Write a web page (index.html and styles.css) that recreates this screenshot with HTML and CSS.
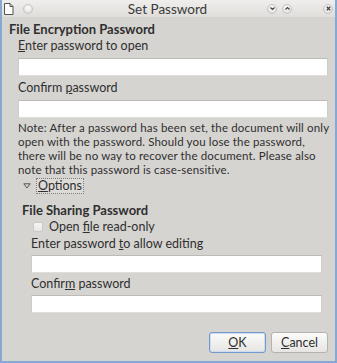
FILE: index.html
```html
<!DOCTYPE html>
<html>
<head>
<meta charset="utf-8">
<link rel="stylesheet" href="styles.css">
</head>
<body>
<div class="window">
  <div class="titlebar">
    <div class="tb-left">
      <svg class="doc-icon" width="11" height="12" viewBox="0 0 11 12"><path d="M1.5 0.5 H7 L10 3.5 V11.5 H1.5 Z" fill="#fff" stroke="#555" stroke-width="1"/><path d="M7 0.5 V3.5 H10" fill="none" stroke="#555" stroke-width="1"/></svg>
      <span class="tb-btn"></span>
    </div>
    <div class="title">Set Password</div>
    <div class="tb-right">
      <span class="tb-btn"><svg width="11" height="11" viewBox="0 0 11 11"><path d="M3.5 4.5 L5.5 6.5 L7.5 4.5" fill="none" stroke="#444" stroke-width="1.2"/></svg></span>
      <span class="tb-btn"><svg width="11" height="11" viewBox="0 0 11 11"><path d="M3.5 6.5 L5.5 4.5 L7.5 6.5" fill="none" stroke="#444" stroke-width="1.2"/></svg></span>
      <span class="tb-btn close"><svg width="11" height="11" viewBox="0 0 11 11"><path d="M3.8 3.8 L7.2 7.2 M7.2 3.8 L3.8 7.2" fill="none" stroke="#444" stroke-width="1.3"/></svg></span>
    </div>
  </div>
  <div class="content">
    <div class="heading">File Encryption Password</div>
    <div class="section enc">
      <div class="label first"><u>E</u>nter password to open</div>
      <div class="input"></div>
      <div class="label">Confirm <u>p</u>assword</div>
      <div class="input"></div>
      <p class="note">Note: After a password has been set, the document will only<br>open with the password. Should you lose the password,<br>there will be no way to recover the document. Please also<br>note that this password is case-sensitive.</p>
      <div class="options">
        <svg class="tri" width="8" height="6" viewBox="0 0 8 6"><path d="M0.8 0.8 H7.2 L4 5 Z" fill="none" stroke="#555" stroke-width="1"/></svg>
        <span class="opt-label"><u>O</u>ptions</span>
      </div>
    </div>
    <div class="heading share">File Sharing Password</div>
    <div class="section shr">
      <div class="check-row"><span class="checkbox"></span><span>Open <u>f</u>ile read-only</span></div>
      <div class="label first">Enter password <u>t</u>o allow editing</div>
      <div class="input"></div>
      <div class="label">Confir<u>m</u> password</div>
      <div class="input"></div>
    </div>
    <div class="buttons">
      <button class="btn default"><u>O</u>K</button>
      <button class="btn"><u>C</u>ancel</button>
    </div>
  </div>
</div>
</body>
</html>
```
FILE: styles.css
```css
html, body {
  margin: 0;
  padding: 0;
  width: 337px;
  height: 363px;
  overflow: hidden;
  background: #d6d4d1;
}
.window {
  box-sizing: border-box;
  width: 337px;
  height: 363px;
  border-left: 2px solid #86a9d4;
  border-right: 2px solid #86a9d4;
  border-bottom: 2px solid #86a9d4;
  background: #d6d4d1;
  font-family: Lato, "Open Sans", sans-serif;
  font-size: 12.5px;
  color: #2f2f2f;
  display: flex;
  flex-direction: column;
}
.titlebar {
  height: 17px;
  display: grid;
  grid-template-columns: 1fr auto 1fr;
  align-items: center;
  background: linear-gradient(#efeeec, #e0dedb);
  flex: none;
}
.tb-left {
  display: flex;
  align-items: center;
  gap: 9px;
  padding-left: 1px;
}
.doc-icon { display: block; }
.tb-btn {
  width: 8px;
  height: 8px;
  border-radius: 50%;
  background: radial-gradient(circle at 50% 35%, #fdfdfc, #d8d7d5);
  border: 1px solid #c5c4c2;
  display: flex;
  align-items: center;
  justify-content: center;
}
.tb-btn svg { display: block; flex: none; }
.title {
  text-align: center;
  font-size: 13.5px;
  color: #3a3a3a;
  margin-left: -2px;
}
.tb-right {
  justify-self: end;
  display: flex;
  align-items: center;
  gap: 5px;
  padding-right: 2px;
}
.tb-right .close { margin-left: 26px; }
.content {
  flex: 1;
  padding: 3px 7px 0 7px;
  display: flex;
  flex-direction: column;
}
.heading {
  font-weight: bold;
  font-size: 13px;
  line-height: 18px;
}
.section.enc {
  padding-left: 9px;
}
.label {
  line-height: 16px;
  margin-top: 4px;
}
.label.first { margin-top: 0; }
.input {
  box-sizing: border-box;
  height: 18px;
  background: #fff;
  border-top: 1px solid #bdbbb8;
  border-left: 1px solid #cfcdca;
  border-right: 1px solid #cfcdca;
  border-bottom: 1px solid #e0dedc;
  margin-top: 4px;
}
.note {
  margin: 3px 0 0 0;
  font-size: 11.5px;
  letter-spacing: 0.15px;
  line-height: 14px;
  white-space: nowrap;
}
.options {
  display: flex;
  align-items: center;
  margin-top: 1px;
  padding-left: 5px;
  gap: 5px;
}
.tri { display: block; }
.opt-label {
  border: 1px dotted #7a7a7a;
  padding: 0 1px;
  line-height: 14px;
  background: #dddbd8;
}
.heading.share {
  margin-top: 7px;
  padding-left: 13px;
}
.section.shr {
  padding-left: 22px;
  padding-right: 6px;
}
.check-row {
  display: flex;
  align-items: center;
  gap: 6px;
  padding-left: 2px;
  line-height: 16px;
}
.checkbox {
  width: 8px;
  height: 8px;
  border: 1px solid #cbc9c6;
  border-radius: 2px;
  background: linear-gradient(#f6f6f5, #e6e5e3);
}
.shr .label { margin-top: 3px; }
.shr .label.first { margin-top: 1px; }
.shr .input { margin-top: 3px; }
.buttons {
  display: flex;
  justify-content: flex-end;
  gap: 5px;
  margin-top: auto;
  margin-bottom: 8px;
}
.btn {
  width: 57px;
  height: 21px;
  font-family: Lato, "Open Sans", sans-serif;
  font-size: 12.5px;
  color: #2f2f2f;
  background: linear-gradient(#fbfbfa, #e6e5e3);
  border: 1px solid #b5b3b0;
  border-radius: 3px;
  padding: 0;
}
.btn.default {
  border-color: #7099c9;
  box-shadow: inset 0 0 0 1px #cddcee;
}
```
